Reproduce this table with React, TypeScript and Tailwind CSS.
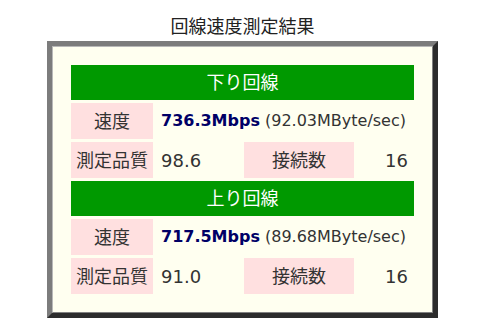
import React from 'react';

type Line = { title: string; mbps: string; mbyte: string; quality: string; conns: number };

const lines: Line[] = [
    { title: '下り回線', mbps: '736.3Mbps', mbyte: '(92.03MByte/sec)', quality: '98.6', conns: 16 },
    { title: '上り回線', mbps: '717.5Mbps', mbyte: '(89.68MByte/sec)', quality: '91.0', conns: 16 },
];

const font = { fontFamily: '"DejaVu Sans", "Noto Sans CJK JP", sans-serif' };

const Label: React.FC<{ children: React.ReactNode }> = ({ children }) => (
    <div className="h-9 bg-[#ffe0e0] flex items-center justify-center text-[18px] text-[#333]">{children}</div>
);

const LineBlock: React.FC<{ line: Line }> = ({ line }) => (
    <>
        <div className="col-span-4 h-[35px] bg-[#009900] text-white text-[18px] flex items-center justify-center">{line.title}</div>
        <Label>速度</Label>
        <div className="col-span-3 h-9 flex items-center pl-[5px] text-[16px] text-[#333] whitespace-nowrap">
            <span className="font-bold text-[#000066]">{line.mbps}</span>
            <span className="ml-[5px]">{line.mbyte}</span>
        </div>
        <Label>測定品質</Label>
        <div className="h-9 flex items-center pl-[5px] text-[18px] text-[#333]">{line.quality}</div>
        <Label>接続数</Label>
        <div className="h-9 flex items-center justify-end pr-[6px] text-[18px] text-[#333]">{line.conns}</div>
    </>
);

export default function App() {
    return (
        <div className="w-[500px] h-[334px] bg-white" style={font}>
            <div className="w-[485px] flex flex-col items-center">
                <h1 className="pt-[13px] leading-6 text-[18px] text-[#222]" style={{ fontFamily: '"Noto Sans CJK JP", sans-serif' }}>回線速度測定結果</h1>
                <div className="mt-[4px] border-[5px] border-t-[#7c7c7c] border-l-[#7c7c7c] border-b-[#2c2c2c] border-r-[#2c2c2c]">
                    <div className="border border-t-[#b8b8b8] border-l-[#b8b8b8] border-b-[#808080] border-r-[#808080] bg-[#fffff0] p-[18px]">
                        <div className="grid grid-cols-[82px_85px_110px_57px] gap-[3px]">
                            {lines.map(line => <LineBlock key={line.title} line={line} />)}
                        </div>
                    </div>
                </div>
            </div>
        </div>
    );
}
